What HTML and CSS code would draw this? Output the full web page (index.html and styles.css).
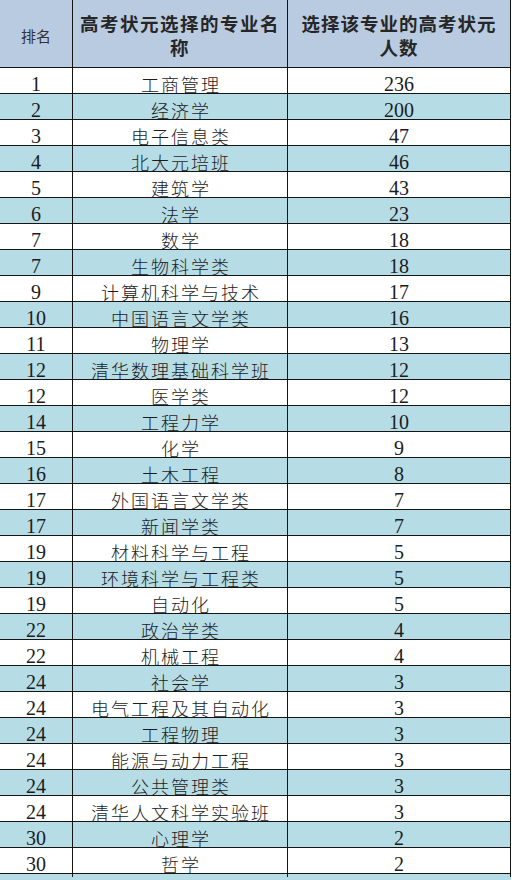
FILE: index.html
```html
<!DOCTYPE html>
<html lang="zh">
<head>
<meta charset="utf-8">
<link rel="stylesheet" href="styles.css">
</head>
<body>
<div class="table">
  <div class="row head">
    <div class="cell rank-h">排名</div>
    <div class="cell name-h"><span class="hl">高考状元选择的专业名</span><span class="hl">称</span></div>
    <div class="cell count-h"><span class="hl">选择该专业的高考状元</span><span class="hl">人数</span></div>
  </div>
  <div class="row"><div class="cell num">1</div><div class="cell name">工商管理</div><div class="cell num">236</div></div>
  <div class="row alt"><div class="cell num">2</div><div class="cell name">经济学</div><div class="cell num">200</div></div>
  <div class="row"><div class="cell num">3</div><div class="cell name">电子信息类</div><div class="cell num">47</div></div>
  <div class="row alt"><div class="cell num">4</div><div class="cell name">北大元培班</div><div class="cell num">46</div></div>
  <div class="row"><div class="cell num">5</div><div class="cell name">建筑学</div><div class="cell num">43</div></div>
  <div class="row alt"><div class="cell num">6</div><div class="cell name">法学</div><div class="cell num">23</div></div>
  <div class="row"><div class="cell num">7</div><div class="cell name">数学</div><div class="cell num">18</div></div>
  <div class="row alt"><div class="cell num">7</div><div class="cell name">生物科学类</div><div class="cell num">18</div></div>
  <div class="row"><div class="cell num">9</div><div class="cell name">计算机科学与技术</div><div class="cell num">17</div></div>
  <div class="row alt"><div class="cell num">10</div><div class="cell name">中国语言文学类</div><div class="cell num">16</div></div>
  <div class="row"><div class="cell num">11</div><div class="cell name">物理学</div><div class="cell num">13</div></div>
  <div class="row alt"><div class="cell num">12</div><div class="cell name">清华数理基础科学班</div><div class="cell num">12</div></div>
  <div class="row"><div class="cell num">12</div><div class="cell name">医学类</div><div class="cell num">12</div></div>
  <div class="row alt"><div class="cell num">14</div><div class="cell name">工程力学</div><div class="cell num">10</div></div>
  <div class="row"><div class="cell num">15</div><div class="cell name">化学</div><div class="cell num">9</div></div>
  <div class="row alt"><div class="cell num">16</div><div class="cell name">土木工程</div><div class="cell num">8</div></div>
  <div class="row"><div class="cell num">17</div><div class="cell name">外国语言文学类</div><div class="cell num">7</div></div>
  <div class="row alt"><div class="cell num">17</div><div class="cell name">新闻学类</div><div class="cell num">7</div></div>
  <div class="row"><div class="cell num">19</div><div class="cell name">材料科学与工程</div><div class="cell num">5</div></div>
  <div class="row alt"><div class="cell num">19</div><div class="cell name">环境科学与工程类</div><div class="cell num">5</div></div>
  <div class="row"><div class="cell num">19</div><div class="cell name">自动化</div><div class="cell num">5</div></div>
  <div class="row alt"><div class="cell num">22</div><div class="cell name">政治学类</div><div class="cell num">4</div></div>
  <div class="row"><div class="cell num">22</div><div class="cell name">机械工程</div><div class="cell num">4</div></div>
  <div class="row alt"><div class="cell num">24</div><div class="cell name">社会学</div><div class="cell num">3</div></div>
  <div class="row"><div class="cell num">24</div><div class="cell name">电气工程及其自动化</div><div class="cell num">3</div></div>
  <div class="row alt"><div class="cell num">24</div><div class="cell name">工程物理</div><div class="cell num">3</div></div>
  <div class="row"><div class="cell num">24</div><div class="cell name">能源与动力工程</div><div class="cell num">3</div></div>
  <div class="row alt"><div class="cell num">24</div><div class="cell name">公共管理类</div><div class="cell num">3</div></div>
  <div class="row"><div class="cell num">24</div><div class="cell name">清华人文科学实验班</div><div class="cell num">3</div></div>
  <div class="row alt"><div class="cell num">30</div><div class="cell name">心理学</div><div class="cell num">2</div></div>
  <div class="row"><div class="cell num">30</div><div class="cell name">哲学</div><div class="cell num">2</div></div>
  <div class="row alt"></div>
</div>
</body>
</html>
```
FILE: styles.css
```css
* { box-sizing: border-box; }
html, body { margin: 0; padding: 0; background: #ffffff; }
body { width: 512px; height: 880px; overflow: hidden; }
.table { width: 511px; }
.row {
  display: grid;
  grid-template-columns: 73px 215px 223px;
  height: 26px;
  border-bottom: 1px solid #151515;
  background: #ffffff;
}
.row.alt { background: #b6dce6; }
.row.head { height: 68px; background: #b9cbe1; }
.cell {
  border-right: 1px solid #151515;
  display: flex;
  align-items: center;
  justify-content: center;
  text-align: center;
  color: #1c1c1c;
  padding-top: 3px;
}
.num {
  font-family: "Liberation Serif", "Noto Sans CJK SC", serif;
  font-size: 20px;
}
.name {
  font-family: "Noto Sans CJK SC", sans-serif;
  font-weight: 300;
  font-size: 18px;
  letter-spacing: 2px;
  padding-left: 2px;
}
.rank-h {
  font-family: "Noto Sans CJK SC", sans-serif;
  font-size: 15px;
  color: #333;
  padding-top: 4px;
}
.name-h, .count-h {
  flex-direction: column;
  font-family: "Noto Sans CJK SC", sans-serif;
  font-weight: 700;
  font-size: 18.5px;
  color: #262626;
  padding-top: 2px;
}
.hl { display: block; line-height: 24px; height: 24px; }
.name-h { letter-spacing: 1.5px; }
.count-h { letter-spacing: 1px; }
```
